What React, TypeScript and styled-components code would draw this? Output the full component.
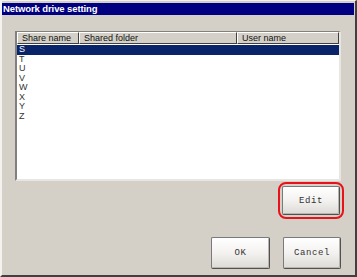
import React from "react";
import styled, { createGlobalStyle } from "styled-components";

const GlobalStyle = createGlobalStyle`
  html, body {
    margin: 0;
    padding: 0;
    background: #d4d0c8;
  }
`;

const drives = ["S", "T", "U", "V", "W", "X", "Y", "Z"];

const columns = [
  { label: "Share name", width: 62 },
  { label: "Shared folder", width: 158 },
  { label: "User name", width: 102 },
];

const App: React.FC = () => {
  return (
    <>
      <GlobalStyle />
      <Window>
        <TitleBar>Network drive setting</TitleBar>
        <Body>
          <ListBox>
            <HeaderRow>
              {columns.map((c) => (
                <HeaderCell key={c.label} $width={c.width}>
                  {c.label}
                </HeaderCell>
              ))}
            </HeaderRow>
            <Rows>
              {drives.map((d, i) => (
                <Row key={d} $selected={i === 0}>
                  {d}
                </Row>
              ))}
            </Rows>
          </ListBox>
          <EditRow>
            <Highlight>
              <Button>Edit</Button>
            </Highlight>
          </EditRow>
          <ButtonRow>
            <Button $width={59}>OK</Button>
            <Button>Cancel</Button>
          </ButtonRow>
        </Body>
      </Window>
    </>
  );
};

export default App;

const Window = styled.div`
  box-sizing: border-box;
  width: 357px;
  height: 277px;
  background: #d4d0c8;
  border-top: 1px solid #f4f2ee;
  border-left: 2px solid #f4f2ee;
  border-right: 2px solid #404040;
  border-bottom: 2px solid #404040;
  display: flex;
  flex-direction: column;
  font-family: "Liberation Sans", Arial, sans-serif;
`;

const TitleBar = styled.div`
  margin: 2px 1px 0 0;
  height: 12px;
  background: #000080;
  color: #fff;
  font-weight: bold;
  font-size: 9.5px;
  line-height: 12px;
  padding-left: 1px;
  letter-spacing: -0.1px;
`;

const Body = styled.div`
  flex: 1;
  display: flex;
  flex-direction: column;
  padding: 16px 14px 0 13px;
`;

const ListBox = styled.div`
  box-sizing: border-box;
  height: 150px;
  background: #fff;
  border-top: 1px solid #808080;
  border-left: 2px solid #808080;
  border-right: 2px solid #e8e6e2;
  border-bottom: 2px solid #e8e6e2;
  display: flex;
  flex-direction: column;
`;

const HeaderRow = styled.div`
  display: flex;
  height: 12px;
`;

const HeaderCell = styled.div<{ $width: number }>`
  box-sizing: border-box;
  width: ${(p) => p.$width}px;
  flex: none;
  background: #d4d0c8;
  border-top: 1px solid #fff;
  border-left: 1px solid #fff;
  border-right: 1px solid #404040;
  border-bottom: 1px solid #404040;
  font-size: 9px;
  line-height: 10px;
  color: #111;
  padding-left: 4px;
  white-space: nowrap;
  overflow: hidden;
  &:last-child {
    flex: 1;
  }
`;

const Rows = styled.div`
  display: flex;
  flex-direction: column;
  padding-top: 1px;
`;

const Row = styled.div<{ $selected?: boolean }>`
  height: 9.5px;
  line-height: 9.5px;
  font-size: 9px;
  padding-left: 2px;
  color: ${(p) => (p.$selected ? "#fff" : "#333")};
  background: ${(p) => (p.$selected ? "#0a246a" : "transparent")};
`;

const EditRow = styled.div`
  display: flex;
  justify-content: flex-end;
  margin-top: 1px;
  margin-right: -3px;
`;

const Highlight = styled.div`
  border: 2px solid #e8121a;
  border-radius: 8px;
  padding: 2px;
  display: flex;
`;

const Button = styled.button<{ $width?: number }>`
  box-sizing: border-box;
  width: ${(p) => p.$width ?? 58}px;
  height: 29px;
  padding: 0;
  border: 1px solid #7a7a7a;
  border-right-color: #505050;
  border-bottom-color: #505050;
  border-radius: 2px;
  background: linear-gradient(#ffffff 0%, #f3f2f0 50%, #dcdad5 100%);
  box-shadow: inset -1px -1px 0 #b8b5ae;
  font-family: "Liberation Mono", "DejaVu Sans Mono", monospace;
  font-size: 9px;
  color: #333;
  letter-spacing: 0.6px;
`;

const ButtonRow = styled.div`
  display: flex;
  justify-content: flex-end;
  gap: 13px;
  margin-top: 18px;
  & > button {
    height: 32px;
  }
`;
